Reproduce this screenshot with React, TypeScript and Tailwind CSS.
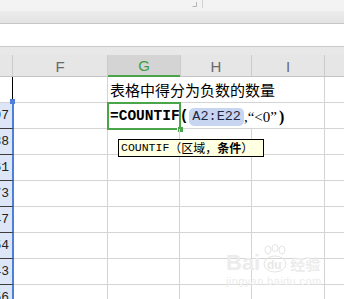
import React from 'react'

const cjk = "font-['Noto_Sans_CJK_SC',sans-serif]"
const mono = "font-['Liberation_Mono','Noto_Sans_CJK_SC',monospace]"

const values = ['97', '38', '61', '73', '47', '54', '43', '56']

function ColumnHeader() {
  return (
    <div className="flex h-[22px] border-b border-[#c4c4c4] bg-[#e6e6e6] font-['Liberation_Sans',sans-serif] text-[15px] text-[#6a6a6a]">
      <div className="w-[13px] border-r border-[#cbcbcb]" />
      <div className="flex w-[95px] items-center justify-center border-r border-[#cbcbcb] pt-[3px]">F</div>
      <div className="flex h-[22px] w-[72px] items-center justify-center border-b-2 border-[#4aa54a] bg-[#d4d4d4] pt-[3px] text-[#3e9e3e]">
        G
      </div>
      <div className="flex w-[72px] items-center justify-center border-r border-l border-[#cbcbcb] pt-[3px]">H</div>
      <div className="flex w-[73px] items-center justify-center border-r border-[#cbcbcb] pt-[3px]">I</div>
      <div className="flex-1" />
    </div>
  )
}

function ValueCell({ value, first }: { value: string; first?: boolean }) {
  return (
    <div className="relative flex w-[14px] items-center justify-end overflow-visible border-r-2 border-b border-r-[#4f7fd9] border-b-[#3c3c3c] bg-[#dde6f6]">
      <div className={`w-[12px] overflow-hidden pr-[3px] text-right text-[13px] text-[#222] ${mono}`}>
        <span className="float-right whitespace-nowrap">{value}</span>
      </div>
      {first && <div className="absolute -top-[4px] -right-[3px] h-[5px] w-[5px] bg-[#4f7fd9]" />}
    </div>
  )
}

function PlainRow({ value }: { value: string }) {
  return (
    <div className="flex h-[26px]">
      <ValueCell value={value} />
      <div className="w-[94px] border-r border-b border-[#d4d4d4]" />
      <div className="w-[72px] border-r border-b border-[#d4d4d4]" />
      <div className="w-[72px] border-r border-b border-[#d4d4d4]" />
      <div className="w-[73px] border-r border-b border-[#d4d4d4]" />
      <div className="flex-1 border-b border-[#d4d4d4]" />
    </div>
  )
}

function Watermark() {
  return (
    <div className="pointer-events-none absolute left-[226px] top-[244px] text-[#ececec]">
      <div className="flex items-end">
        <span className="font-['Liberation_Sans',sans-serif] text-[22px] font-bold leading-[22px]">Bai</span>
        <svg width="28" height="30" viewBox="0 0 28 30" className="mx-[1px]">
          <g fill="none" stroke="#e4e4e4" strokeWidth="1">
            <ellipse cx="7" cy="6" rx="3" ry="4" />
            <ellipse cx="14" cy="4" rx="3" ry="3.5" />
            <ellipse cx="21" cy="6" rx="3" ry="4" />
            <ellipse cx="14" cy="20" rx="11" ry="8" />
          </g>
          <text x="6" y="25" fontSize="12" fontWeight="bold" fill="#e8e8e8" fontFamily="Liberation Sans">
            du
          </text>
        </svg>
        <span className={`text-[15px] font-bold leading-[20px] ${cjk}`}>经验</span>
      </div>
      <div className="font-['Liberation_Sans',sans-serif] text-[11px] leading-[14px] tracking-[0.4px]">jingyan.baidu.com</div>
    </div>
  )
}

export default function App() {
  return (
    <div className="relative h-[299px] w-[344px] overflow-hidden bg-white">
      {/* ribbon remains */}
      <div className="flex h-[11px] items-start bg-[#f3f3f3] pl-[192px]">
        <svg width="6" height="7" viewBox="0 0 6 7" className="mt-[1px]">
          <path d="M4.5 1v4.5H0.5" fill="none" stroke="#b5b5b5" strokeWidth="1" />
        </svg>
        <div className="ml-[4px] h-[8px] w-px bg-[#d2d2d2]" />
      </div>
      <div className="h-[12px] bg-gradient-to-b from-[#ececec] to-[#e3e3e3]" />
      <div className="h-px bg-[#c6c6c6]" />
      <div className="h-[22px] bg-white" />
      <div className="h-px bg-[#cacaca]" />
      <div className="h-[8px] bg-[#e8e8e8]" />

      <ColumnHeader />

      {/* title row */}
      <div className="flex h-[26px]">
        <div className="w-[13px] border-r border-b border-r-black border-b-[#d4d4d4]" />
        <div className="w-[95px] border-r border-b border-[#d4d4d4]" />
        <div className="flex w-[72px] items-center overflow-visible border-b border-[#d4d4d4] pl-[2px]">
          <span className={`whitespace-nowrap pt-[1px] text-[15px] text-black ${cjk}`}>表格中得分为负数的数量</span>
        </div>
        <div className="w-[72px] border-b border-[#d4d4d4]" />
        <div className="w-[73px] border-r border-b border-[#d4d4d4]" />
        <div className="flex-1 border-b border-[#d4d4d4]" />
      </div>

      {/* formula row */}
      <div className="flex h-[26px]">
        <ValueCell value={values[0]} first />
        <div className="w-[94px] border-r border-b border-[#d4d4d4]" />
        <div className="relative flex w-[72px] items-center border-b border-[#d4d4d4] pl-[2px]">
          <div className="absolute -top-px -right-px -bottom-[2px] -left-px border-2 border-[#4aa54a]" />
          <div className="absolute -right-[3px] -bottom-[4px] h-[5px] w-[6px] border-l border-white bg-[#4aa54a]" />
          <div className="relative z-10 flex items-center whitespace-nowrap pt-[3px] text-black">
            <span className={`text-[14.5px] font-bold ${mono}`}>=COUNTIF</span>
            <span className={`text-[14.5px] font-bold ${mono}`}>(</span>
            <span className={`ml-[1px] rounded-[5px] bg-[#c8d5f1] px-[3px] text-[13.5px] leading-[18px] text-[#1e2740] ${mono}`}>
              A2:E22
            </span>
            <span className="font-['Liberation_Serif',serif] text-[15px]">,“&lt;0”</span>
            <span className="ml-[2px] font-['Liberation_Serif',serif] text-[16px] font-bold">)</span>
          </div>
        </div>
        <div className="w-[72px] border-b border-[#d4d4d4]" />
        <div className="w-[73px] border-r border-b border-[#d4d4d4]" />
        <div className="flex-1 border-b border-[#d4d4d4]" />
      </div>

      {/* row with the function tooltip */}
      <div className="flex h-[26px]">
        <ValueCell value={values[1]} />
        <div className="w-[94px] border-r border-b border-[#d4d4d4]" />
        <div className="relative w-[72px] border-r border-b border-[#d4d4d4]">
          <div className="absolute top-[10px] left-[10px] z-20 flex h-[18px] w-[146px] items-center whitespace-nowrap border border-black bg-[#ffffe1] pl-[2px] text-[12px] text-black">
            <span className={`text-[11.5px] ${mono}`}>COUNTIF </span>
            <span className={cjk}>（区域，</span>
            <span className={`font-bold ${cjk}`}>条件</span>
            <span className={cjk}>）</span>
          </div>
        </div>
        <div className="w-[72px] border-r border-b border-[#d4d4d4]" />
        <div className="w-[73px] border-r border-b border-[#d4d4d4]" />
        <div className="flex-1 border-b border-[#d4d4d4]" />
      </div>

      {values.slice(2).map((v) => (
        <PlainRow key={v} value={v} />
      ))}

      <Watermark />
    </div>
  )
}
